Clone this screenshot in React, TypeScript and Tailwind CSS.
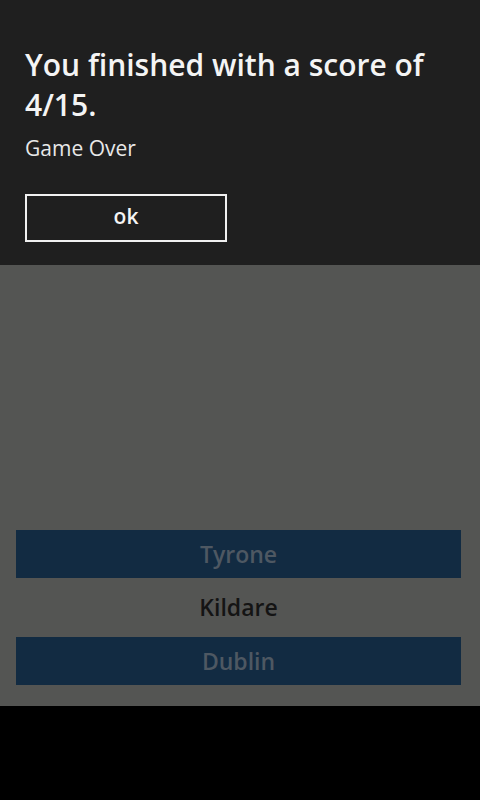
export default function App() {
  const font = { fontFamily: '"Open Sans", "Noto Sans", sans-serif' };
  return (
    <div className="w-[480px] h-[800px] bg-black flex flex-col overflow-hidden" style={font}>
      <div className="h-[706px] bg-[#545553] flex flex-col">
        <div className="h-[265px] bg-[#1f1f1f] px-[25px] pt-[45px] flex flex-col">
          <div className="text-[30px] leading-[40px] text-[#f4f4f4] font-semibold">
            You finished with a score of 4/15.
          </div>
          <div className="mt-[9px] text-[21px] leading-[28px] text-[#e8e8e8]">Game Over</div>
          <div className="mt-[32px] w-[202px] h-[48px] border-2 border-[#f0f0f0] flex items-center justify-center text-[#f4f4f4] text-[21px] font-semibold pb-[2px]">
            ok
          </div>
        </div>
        <div className="flex-1 flex flex-col justify-end pl-[16px] pr-[19px] pb-[21px]">
          <div className="h-[48px] bg-[#122b42] flex items-center justify-center text-[23px] font-semibold text-[#4e5862]">
            Tyrone
          </div>
          <div className="h-[59px] flex items-center justify-center text-[23px] font-semibold text-[#141414]">
            Kildare
          </div>
          <div className="h-[48px] bg-[#122b42] flex items-center justify-center text-[23px] font-semibold text-[#4e5862]">
            Dublin
          </div>
        </div>
      </div>
    </div>
  );
}
